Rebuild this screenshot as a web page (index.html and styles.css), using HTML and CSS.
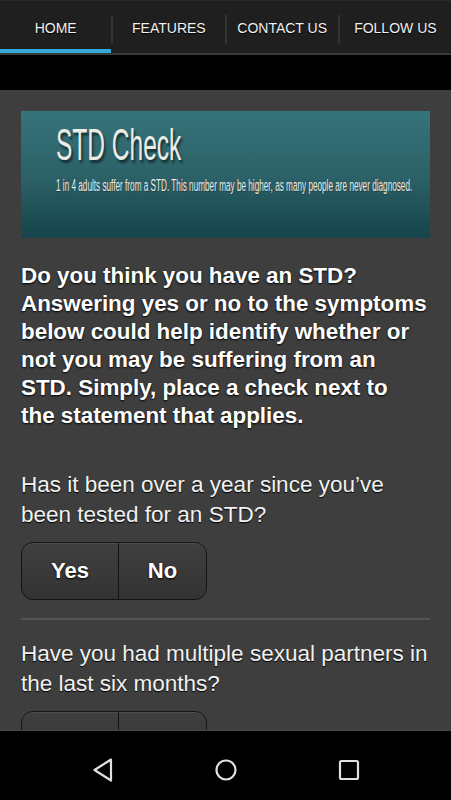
FILE: index.html
```html
<!DOCTYPE html>
<html>
<head>
<meta charset="utf-8">
<link rel="stylesheet" href="styles.css">
</head>
<body>
<div class="screen">
  <nav class="tabs">
    <div class="tab active">HOME</div>
    <div class="sep"></div>
    <div class="tab">FEATURES</div>
    <div class="sep"></div>
    <div class="tab">CONTACT US</div>
    <div class="sep"></div>
    <div class="tab">FOLLOW US</div>
  </nav>
  <div class="band"></div>
  <main class="content">
    <div class="banner">
      <div class="banner-title">STD Check</div>
      <div class="banner-sub">1 in 4 adults suffer from a STD. This number may be higher, as many people are never diagnosed.</div>
    </div>
    <p class="intro">Do you think you have an STD?<br>Answering yes or no to the symptoms<br>below could help identify whether or<br>not you may be suffering from an<br>STD. Simply, place a check next to<br>the statement that applies.</p>
    <section class="question">
      <p class="q-text">Has it been over a year since you’ve been tested for an STD?</p>
      <div class="seg">
        <div class="seg-btn yes">Yes</div>
        <div class="seg-btn no">No</div>
      </div>
    </section>
    <hr class="divider">
    <section class="question">
      <p class="q-text">Have you had multiple sexual partners in the last six months?</p>
      <div class="seg">
        <div class="seg-btn yes">Yes</div>
        <div class="seg-btn no">No</div>
      </div>
    </section>
  </main>
  <footer class="sysnav">
    <svg class="ico" width="24" height="24" viewBox="0 0 24 24"><path d="M20 1.5 L3.5 12 L20 22.5 Z" fill="none" stroke="#e0e0e0" stroke-width="2.2" stroke-linejoin="round"/></svg>
    <svg class="ico" width="24" height="24" viewBox="0 0 24 24"><circle cx="12" cy="12" r="9.5" fill="none" stroke="#e0e0e0" stroke-width="2.2"/></svg>
    <svg class="ico" width="24" height="24" viewBox="0 0 24 24"><rect x="3" y="3" width="18" height="18" rx="1.5" fill="none" stroke="#e0e0e0" stroke-width="2.2"/></svg>
  </footer>
</div>
</body>
</html>
```

FILE: styles.css
```css
* { box-sizing: border-box; }
html, body { margin: 0; padding: 0; }
body {
  font-family: "Liberation Sans", Arial, sans-serif;
  background: #000;
}
.screen {
  width: 451px;
  height: 800px;
  display: flex;
  flex-direction: column;
  overflow: hidden;
}
.tabs {
  display: flex;
  align-items: center;
  height: 55px;
  background: #1f1f1f;
  border-top: 1px solid #2a2a2a;
  border-bottom: 2px solid #3b3b3b;
  flex-shrink: 0;
}
.tab {
  flex: 1;
  height: 52px;
  display: flex;
  align-items: center;
  justify-content: center;
  padding-top: 5px;
  font-size: 14px;
  color: #f0f0f0;
  text-shadow: 0 1px 1px #000;
  border-bottom: 4px solid transparent;
  white-space: nowrap;
}
.tab.active { border-bottom-color: #35a9dc; }
.sep {
  width: 2px;
  height: 29px;
  margin-top: 5px;
  background: #333;
  flex-shrink: 0;
}
.band {
  height: 35px;
  background: #000;
  flex-shrink: 0;
}
.content {
  flex: 1;
  min-height: 0;
  overflow: hidden;
  background: #3e3e3e;
  padding: 21px 21px 0;
}
.banner {
  height: 127px;
  background: linear-gradient(to bottom, #36747a 0%, #2c6268 50%, #16444a 100%);
  padding: 11px 0 0 35px;
  overflow: hidden;
  white-space: nowrap;
  color: #ecebe6;
}
.banner-title {
  font-size: 45px;
  line-height: 45px;
  transform: scaleX(0.545);
  transform-origin: left top;
  text-shadow: 3px 3px 3px rgba(0,0,0,0.55);
}
.banner-sub {
  margin-top: 11px;
  font-size: 16px;
  line-height: 16px;
  transform: scaleX(0.512);
  transform-origin: left top;
  text-shadow: 1px 1px 1px rgba(0,0,0,0.3);
}
.intro {
  margin: 24px 0 0;
  font-size: 22.4px;
  line-height: 28px;
  font-weight: bold;
  color: #fff;
  white-space: nowrap;
  text-shadow: 0 1px 2px #000;
}
.question { margin-top: 40px; }
.q-text {
  margin: 0;
  font-size: 22.5px;
  line-height: 30px;
  color: #f2f2f2;
  text-shadow: 0 1px 1px #000;
}
.seg {
  display: flex;
  width: 186px;
  height: 58px;
  margin-top: 12px;
  border: 1px solid #141414;
  border-radius: 12px;
  overflow: hidden;
  background: linear-gradient(to bottom, #3f3f3f 0%, #333 100%);
  box-shadow: inset 0 1px 0 rgba(255,255,255,0.08);
}
.seg-btn {
  display: flex;
  align-items: center;
  justify-content: center;
  font-size: 22px;
  font-weight: bold;
  color: #fff;
  text-shadow: 0 1px 2px #000;
}
.seg-btn.yes { width: 97px; border-right: 1px solid #141414; }
.seg-btn.no { flex: 1; }
.divider {
  margin: 18px 0 0;
  border: 0;
  height: 2px;
  background: #555;
}
.question + .divider + .question { margin-top: 19px; }
.sysnav {
  flex-shrink: 0;
  height: 70px;
  background: #000;
  border-top: 1px solid #4a4a4a;
  display: flex;
  align-items: center;
  justify-content: center;
  gap: 99px;
  padding-top: 9px;
}
.ico { display: block; }
```
